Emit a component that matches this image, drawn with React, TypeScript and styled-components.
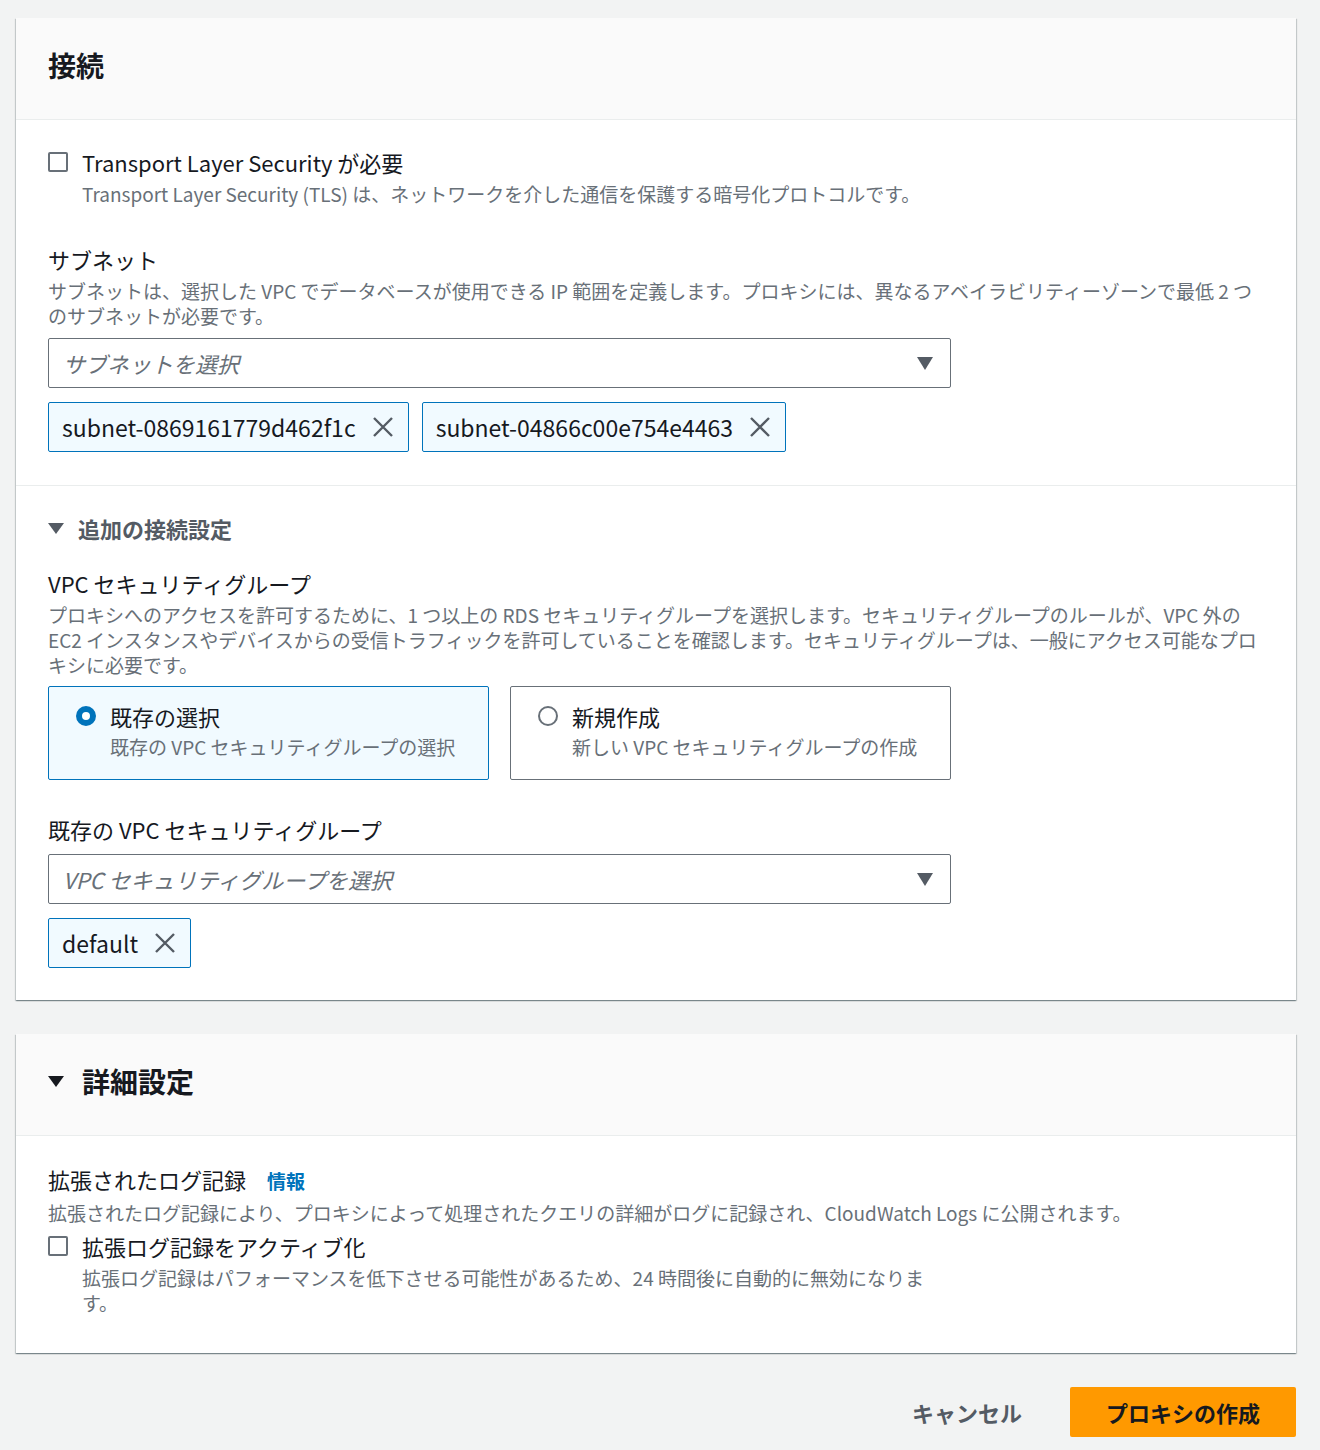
import styled, { createGlobalStyle } from "styled-components"

const GlobalStyle = createGlobalStyle`
  * { box-sizing: border-box; }
  body {
    margin: 0;
    background: #f2f3f3;
    font-family: "Noto Sans CJK JP", "Noto Sans", sans-serif;
    color: #16191f;
  }
`

const Page = styled.div`
  padding: 18px 24px 14px 16px;
  display: flex; flex-direction: column; gap: 34px;
`

const Container = styled.section`
  background: #fff;
  box-shadow: 0 1px 1px 0 rgba(0, 28, 36, 0.3), 1px 1px 1px 0 rgba(0, 28, 36, 0.15), -1px 1px 1px 0 rgba(0, 28, 36, 0.15);
`

const Header = styled.header`
  background: #fafafa;
  border-bottom: 1px solid #eaeded;
  height: 102px;
  padding: 0 32px 7px;
  display: flex; align-items: center; gap: 18px;
`

const Title = styled.h2`
  margin: 0; font-size: 28px; font-weight: 700; line-height: 36px;
`

const Body = styled.div<{ $top: number; $bottom: number }>`
  padding: ${p => p.$top}px 32px ${p => p.$bottom}px;
`

const Divider = styled.hr`
  border: 0; border-top: 1px solid #eaeded; margin: 0;
`

const Field = styled.div<{ $mt?: number }>`
  margin-top: ${p => p.$mt ?? 0}px;
`

const Label = styled.div`
  font-size: 22px; line-height: 30px; display: flex; align-items: baseline; gap: 21px;
`

const Info = styled.span`
  font-size: 19px; font-weight: 700; color: #0073bb;
`

const Desc = styled.div<{ $max?: number }>`
  font-size: 19px; line-height: 25px; color: #687078; margin-top: 4px;
  max-width: ${p => (p.$max ? `${p.$max}px` : "none")};
`

const CheckRow = styled.div`
  display: flex; gap: 14px; align-items: flex-start;
`

const Checkbox = styled.span`
  width: 20px; height: 20px; margin-top: 5px; flex: none;
  border: 2px solid #687078; border-radius: 2px; background: #fff;
`

const SelectBox = styled.div`
  margin-top: 10px;
  width: 903px; height: 50px;
  border: 1px solid #687078; border-radius: 2px;
  display: flex; align-items: center; justify-content: space-between;
  padding: 0 17px 0 14px;
`

const Placeholder = styled.span`
  font-size: 22px; font-style: italic; color: #687078;
`

const Tokens = styled.div`
  margin-top: 14px; display: flex; gap: 13px;
`

const Token = styled.div`
  height: 50px; padding: 0 14px 0 13px;
  display: flex; align-items: center; gap: 16px;
  background: #f1faff; border: 1px solid #0073bb; border-radius: 2px;
  font-size: 23px;
`

const Expander = styled.div<{ $size: number; $color: string }>`
  display: flex; align-items: center; gap: 14px;
  font-size: ${p => p.$size}px; font-weight: 700; color: ${p => p.$color}; line-height: 30px;
`

const Cards = styled.div`
  margin-top: 9px; display: grid; grid-template-columns: 441px 441px; gap: 21px;
`

const Card = styled.div<{ $active?: boolean }>`
  height: 94px; padding: 14px 20px 0 27px;
  display: flex; gap: 14px; align-items: flex-start;
  border: 1px solid ${p => (p.$active ? "#0073bb" : "#687078")};
  background: ${p => (p.$active ? "#f1faff" : "#fff")};
  border-radius: 2px;
`

const Radio = styled.span<{ $on?: boolean }>`
  width: 20px; height: 20px; border-radius: 50%; flex: none; margin-top: 5px;
  border: ${p => (p.$on ? "6px solid #0073bb" : "2px solid #687078")};
  background: #fff;
`

const CardDesc = styled.div`
  font-size: 19px; line-height: 25px; color: #687078; margin-top: 3px;
`

const Actions = styled.div`
  display: flex; justify-content: flex-end; align-items: center; gap: 48px;
`

const LinkButton = styled.button`
  border: 0; background: none; padding: 0; font: inherit;
  font-size: 22px; font-weight: 700; color: #545b64;
`

const PrimaryButton = styled.button`
  border: 0; border-radius: 2px; background: #ff9900;
  width: 226px; height: 50px; font: inherit;
  font-size: 22px; font-weight: 700; color: #16191f;
`

const Caret = ({ color }: { color: string }) => (
  <svg width="16" height="12" viewBox="0 0 16 12">
    <polygon points="0,1 16,1 8,12" fill={color} />
  </svg>
)

const Close = () => (
  <svg width="22" height="22" viewBox="0 0 22 22">
    <path d="M2 2 L20 20 M20 2 L2 20" stroke="#545b64" strokeWidth="2.4" fill="none" />
  </svg>
)

const Select = ({ placeholder }: { placeholder: string }) => (
  <SelectBox>
    <Placeholder>{placeholder}</Placeholder>
    <svg width="16" height="13" viewBox="0 0 16 13">
      <polygon points="0,0 16,0 8,13" fill="#545b64" />
    </svg>
  </SelectBox>
)

const App = () => (
  <Page>
    <GlobalStyle />
    <Container>
      <Header>
        <Title>接続</Title>
      </Header>
      <Body $top={27} $bottom={33}>
        <CheckRow>
          <Checkbox />
          <div>
            <Label>Transport Layer Security が必要</Label>
            <Desc>Transport Layer Security (TLS) は、ネットワークを介した通信を保護する暗号化プロトコルです。</Desc>
          </div>
        </CheckRow>
        <Field $mt={38}>
          <Label>サブネット</Label>
          <Desc>サブネットは、選択した VPC でデータベースが使用できる IP 範囲を定義します。プロキシには、異なるアベイラビリティーゾーンで最低 2 つのサブネットが必要です。</Desc>
          <Select placeholder="サブネットを選択" />
          <Tokens>
            <Token>subnet-0869161779d462f1c <Close /></Token>
            <Token>subnet-04866c00e754e4463 <Close /></Token>
          </Tokens>
        </Field>
      </Body>
      <Divider />
      <Body $top={27} $bottom={32}>
        <Expander $size={22} $color="#545b64">
          <Caret color="#545b64" />
          追加の接続設定
        </Expander>
        <Field $mt={25}>
          <Label>VPC セキュリティグループ</Label>
          <Desc>プロキシへのアクセスを許可するために、1 つ以上の RDS セキュリティグループを選択します。セキュリティグループのルールが、VPC 外の EC2 インスタンスやデバイスからの受信トラフィックを許可していることを確認します。セキュリティグループは、一般にアクセス可能なプロキシに必要です。</Desc>
          <Cards>
            <Card $active>
              <Radio $on />
              <div>
                <Label>既存の選択</Label>
                <CardDesc>既存の VPC セキュリティグループの選択</CardDesc>
              </div>
            </Card>
            <Card>
              <Radio />
              <div>
                <Label>新規作成</Label>
                <CardDesc>新しい VPC セキュリティグループの作成</CardDesc>
              </div>
            </Card>
          </Cards>
        </Field>
        <Field $mt={34}>
          <Label>既存の VPC セキュリティグループ</Label>
          <Select placeholder="VPC セキュリティグループを選択" />
          <Tokens>
            <Token>default <Close /></Token>
          </Tokens>
        </Field>
      </Body>
    </Container>

    <Container>
      <Header>
        <Caret color="#16191f" />
        <Title>詳細設定</Title>
      </Header>
      <Body $top={28} $bottom={38}>
        <Label>
          拡張されたログ記録 <Info>情報</Info>
        </Label>
        <Desc>拡張されたログ記録により、プロキシによって処理されたクエリの詳細がログに記録され、CloudWatch Logs に公開されます。</Desc>
        <Field $mt={6}>
          <CheckRow>
            <Checkbox />
            <div>
              <Label>拡張ログ記録をアクティブ化</Label>
              <Desc $max={860}>拡張ログ記録はパフォーマンスを低下させる可能性があるため、24 時間後に自動的に無効になります。</Desc>
            </div>
          </CheckRow>
        </Field>
      </Body>
    </Container>

    <Actions>
      <LinkButton>キャンセル</LinkButton>
      <PrimaryButton>プロキシの作成</PrimaryButton>
    </Actions>
  </Page>
)

export default App
